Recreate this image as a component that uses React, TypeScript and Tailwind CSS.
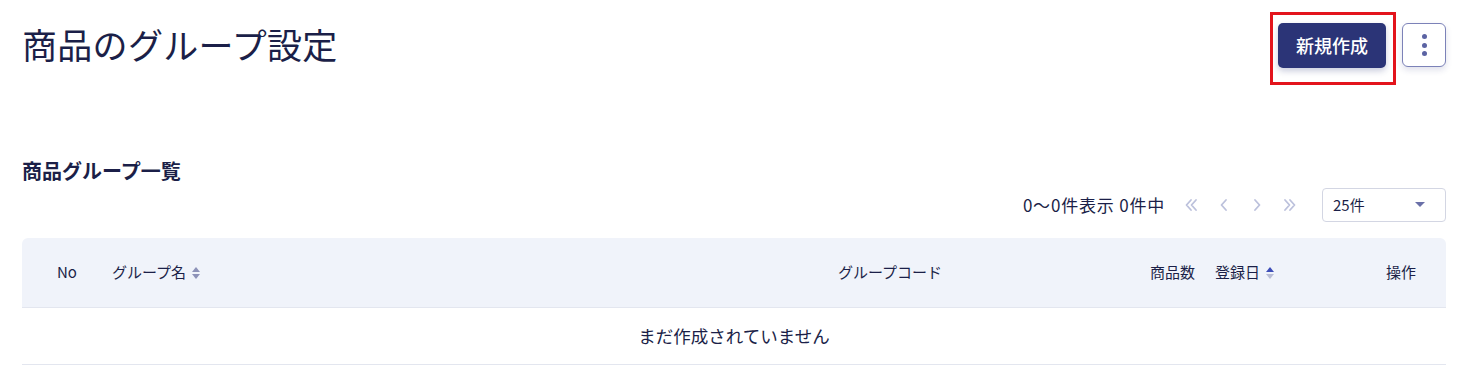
import React from "react";

const Sort = ({ active }: { active?: boolean }) => (
  <svg width="10" height="14" viewBox="0 0 10 14" className="ml-[5px]">
    <path d="M5 1 L9 6 L1 6 Z" fill={active ? "#3d4db8" : "#8d92b8"} />
    <path d="M5 13 L9 8 L1 8 Z" fill={active ? "#b9bdd6" : "#8d92b8"} />
  </svg>
);

const Chev = ({ d }: { d: string }) => (
  <svg width="16" height="16" viewBox="0 0 16 16" fill="none" stroke="#bcc1dc" strokeWidth="1.8" strokeLinecap="round" strokeLinejoin="round">
    <path d={d} />
  </svg>
);

export default function App() {
  return (
    <div className="w-[1460px] h-[382px] bg-white font-['Noto_Sans_CJK_JP',sans-serif] text-[#1b1f48] pl-[22px] pr-[14px] overflow-hidden">
      <div className="flex items-start justify-between pt-[23px]">
        <h1 className="text-[35px] leading-[40px] mt-[1px] font-normal tracking-[0.3px]">商品のグループ設定</h1>
        <div className="flex items-start gap-[16px]">
          <div className="relative">
            <button className="w-[108px] h-[45px] rounded-[5px] bg-[#2b3477] text-white text-[18px] font-medium shadow-[0_3px_6px_rgba(40,50,120,0.25)]">
              新規作成
            </button>
            <span className="absolute -left-[8px] -top-[11px] -right-[10px] -bottom-[17px] border-[3px] border-[#e3141c] pointer-events-none" />
          </div>
          <button className="w-[44px] h-[44px] rounded-[6px] border border-[#7c82b8] bg-white shadow-[0_3px_6px_rgba(40,50,120,0.15)] flex flex-col items-center justify-center gap-[3.5px]">
            <span className="w-[5px] h-[5px] rounded-full bg-[#5b63a3]" />
            <span className="w-[5px] h-[5px] rounded-full bg-[#5b63a3]" />
            <span className="w-[5px] h-[5px] rounded-full bg-[#5b63a3]" />
          </button>
        </div>
      </div>

      <h2 className="mt-[91px] text-[20px] leading-[24px] font-bold">商品グループ一覧</h2>

      <div className="flex items-center justify-end mt-[5px] h-[34px]">
        <span className="text-[17px] tracking-[0.8px] text-[#1b1f48]">0～0件表示 0件中</span>
        <div className="flex items-center ml-[18px] gap-[17px]">
          <Chev d="M8 3 L3.5 8 L8 13 M13 3 L8.5 8 L13 13" />
          <Chev d="M10 3 L5.5 8 L10 13" />
          <Chev d="M6 3 L10.5 8 L6 13" />
          <Chev d="M3 3 L7.5 8 L3 13 M8 3 L12.5 8 L8 13" />
        </div>
        <div className="ml-[24px] w-[124px] h-[34px] border border-[#d3d6e3] rounded-[4px] flex items-center justify-between pl-[10px] pr-[20px]">
          <span className="text-[15px]">25件</span>
          <svg width="10" height="6" viewBox="0 0 10 6"><path d="M0 0 L10 0 L5 5 Z" fill="#6a70a8" /></svg>
        </div>
      </div>

      <div className="mt-[16px]">
        <div className="h-[70px] bg-[#f0f3fa] rounded-t-[6px] flex items-center pl-[35px] pr-[30px] text-[15px] border-b border-[#e3e6ef]">
          <div className="w-[55px]">No</div>
          <div className="w-[726px] flex items-center">グループ名<Sort /></div>
          <div className="w-[312px]">グループコード</div>
          <div className="w-[65px]">商品数</div>
          <div className="flex-1 flex items-center">登録日<Sort active /></div>
          <div>操作</div>
        </div>
        <div className="h-[57px] flex items-center justify-center border-b border-[#e3e6ef] text-[17.5px]">
          まだ作成されていません
        </div>
      </div>
    </div>
  );
}
